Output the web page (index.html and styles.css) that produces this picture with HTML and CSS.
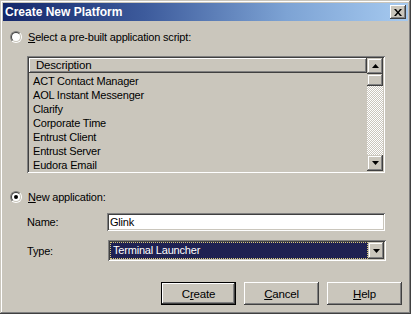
FILE: index.html
```html
<!DOCTYPE html>
<html>
<head>
<meta charset="utf-8">
<link rel="stylesheet" href="styles.css">
</head>
<body>
<div class="window">
  <div class="titlebar">
    <span class="title">Create New Platform</span>
    <span class="close"><svg width="8" height="7" viewBox="0 0 8 7"><path d="M0 0h2l2 2.5 2-2.5h2l-3 3.5 3 3.5h-2l-2-2.5-2 2.5h-2l3-3.5z" fill="#000"/></svg></span>
  </div>
  <div class="content">
    <div class="radio-row">
      <span class="radio"><span class="radio-in"></span></span>
      <span class="label"><u>S</u>elect a pre-built application script:</span>
    </div>
    <div class="listbox">
      <div class="list-main">
        <div class="list-header">Description</div>
        <div class="items">
          <div class="item">ACT Contact Manager</div>
          <div class="item">AOL Instant Messenger</div>
          <div class="item">Clarify</div>
          <div class="item">Corporate Time</div>
          <div class="item">Entrust Client</div>
          <div class="item">Entrust Server</div>
          <div class="item">Eudora Email</div>
        </div>
      </div>
      <div class="vscroll">
        <div class="sb-btn"><svg width="7" height="4" viewBox="0 0 7 4"><path d="M3.5 0L7 4H0z" fill="#000"/></svg></div>
        <div class="sb-thumb"></div>
        <div class="sb-track"></div>
        <div class="sb-btn"><svg width="7" height="4" viewBox="0 0 7 4"><path d="M0 0h7L3.5 4z" fill="#000"/></svg></div>
      </div>
    </div>
    <div class="radio-row second">
      <span class="radio"><span class="radio-in"><span class="dot"></span></span></span>
      <span class="label"><u>N</u>ew application:</span>
    </div>
    <div class="field-row name-row">
      <span class="field-label">Name:</span>
      <div class="textbox">Glink</div>
    </div>
    <div class="field-row type-row">
      <span class="field-label">Type:</span>
      <div class="combo">
        <div class="combo-value"><span class="focus">Terminal Launcher</span></div>
        <div class="combo-btn"><svg width="7" height="4" viewBox="0 0 7 4"><path d="M0 0h7L3.5 4z" fill="#000"/></svg></div>
      </div>
    </div>
    <div class="buttons">
      <div class="btn default"><span class="btn-in">C<u>r</u>eate</span></div>
      <div class="btn"><span class="btn-in"><u>C</u>ancel</span></div>
      <div class="btn"><span class="btn-in"><u>H</u>elp</span></div>
    </div>
  </div>
</div>
</body>
</html>
```
FILE: styles.css
```css
* { box-sizing: border-box; }
html, body { margin: 0; padding: 0; background: #cac6bc; }
body {
  font-family: "Liberation Sans", Arial, sans-serif;
  font-size: 11px;
  letter-spacing: -0.2px;
  color: #000;
}
u { text-decoration: underline; text-underline-offset: 1px; }
.window {
  width: 411px;
  height: 314px;
  background: #cac6bc;
  padding: 3px;
  box-shadow: inset -1px -1px #404040, inset 1px 1px #cac6bc, inset -2px -2px #808080, inset 2px 2px #fff;
}
.titlebar {
  height: 18px;
  display: flex;
  align-items: center;
  justify-content: space-between;
  background: linear-gradient(to right, #14276a, #3d5b9c 35%, #7da3d4 70%, #a6caf0);
  padding: 0 2px;
}
.title {
  color: #fff;
  font-weight: bold;
  font-size: 12px;
  letter-spacing: 0;
}
.close {
  width: 16px;
  height: 14px;
  background: #cac6bc;
  display: flex;
  align-items: center;
  justify-content: center;
  box-shadow: inset -1px -1px #404040, inset 1px 1px #fff, inset -2px -2px #808080;
}
.content {
  padding: 10px 6px 0 7px;
}
.radio-row {
  display: flex;
  align-items: center;
  gap: 6px;
  height: 12px;
}
.radio-row.second { margin-top: 18px; }
.radio {
  width: 12px;
  height: 12px;
  border-radius: 50%;
  border: 1px solid;
  border-color: #808080 #fff #fff #808080;
  display: flex;
}
.radio-in {
  width: 10px;
  height: 10px;
  border-radius: 50%;
  border: 1px solid;
  border-color: #404040 #cac6bc #cac6bc #404040;
  background: #fff;
  display: flex;
  align-items: center;
  justify-content: center;
}
.dot {
  width: 4px;
  height: 4px;
  border-radius: 50%;
  background: #000;
}
.listbox {
  margin: 13px 0 0 17px;
  width: 358px;
  height: 117px;
  padding: 2px;
  background: #cac6bc;
  box-shadow: inset 1px 1px #808080, inset -1px -1px #fff, inset 2px 2px #404040, inset -2px -2px #cac6bc;
  display: flex;
}
.list-main {
  flex: 1;
  overflow: hidden;
  display: flex;
  flex-direction: column;
}
.list-header {
  height: 16px;
  line-height: 15px;
  padding-left: 7px;
  box-shadow: inset -1px -1px #404040, inset 1px 1px #fff, inset -2px -2px #808080;
  font-size: 11.5px;
}
.items { padding-top: 1px; }
.item {
  height: 14px;
  line-height: 14px;
  padding-left: 4px;
  white-space: nowrap;
}
.vscroll {
  width: 16px;
  display: flex;
  flex-direction: column;
}
.sb-btn {
  height: 16px;
  display: flex;
  align-items: center;
  justify-content: center;
  background: #cac6bc;
  box-shadow: inset -1px -1px #404040, inset 1px 1px #cac6bc, inset -2px -2px #808080, inset 2px 2px #fff;
}
.sb-thumb {
  height: 12px;
  background: #cac6bc;
  box-shadow: inset -1px -1px #404040, inset 1px 1px #cac6bc, inset -2px -2px #808080, inset 2px 2px #fff;
}
.sb-track {
  flex: 1;
  background: repeating-conic-gradient(#fff 0 25%, #cac6bc 0 50%) 0 0 / 2px 2px;
}
.field-row {
  display: flex;
  align-items: center;
  margin-left: 17px;
}
.name-row { margin-top: 10px; }
.type-row { margin-top: 9px; }
.field-label { width: 80px; }
.textbox {
  width: 278px;
  height: 18px;
  background: #fff;
  padding: 2px 3px;
  line-height: 14px;
  box-shadow: inset 1px 1px #808080, inset -1px -1px #fff, inset 2px 2px #404040, inset -2px -2px #cac6bc;
}
.combo {
  width: 278px;
  height: 21px;
  margin-left: 1px;
  padding: 2px;
  background: #fff;
  display: flex;
  box-shadow: inset 1px 1px #808080, inset -1px -1px #fff, inset 2px 2px #404040, inset -2px -2px #cac6bc;
}
.combo-value {
  flex: 1;
  background: #1f2152;
  color: #fff;
  display: flex;
}
.focus {
  flex: 1;
  border: 1px dotted #d8c878;
  line-height: 15px;
  padding-left: 2px;
}
.combo-btn {
  width: 16px;
  background: #cac6bc;
  display: flex;
  align-items: center;
  justify-content: center;
  box-shadow: inset -1px -1px #404040, inset 1px 1px #cac6bc, inset -2px -2px #808080, inset 2px 2px #fff;
}
.buttons {
  margin-top: 21px;
  display: flex;
  justify-content: flex-end;
  gap: 8px;
  padding-right: 0;
}
.btn {
  width: 75px;
  height: 23px;
  display: flex;
  align-items: center;
  justify-content: center;
  background: #cac6bc;
  box-shadow: inset -1px -1px #404040, inset 1px 1px #fff, inset -2px -2px #808080;
}
.btn.default {
  border: 1px solid #000;
  box-shadow: inset -1px -1px #404040, inset 1px 1px #fff, inset -2px -2px #808080;
}
.btn-in { font-size: 11.5px; }
```
